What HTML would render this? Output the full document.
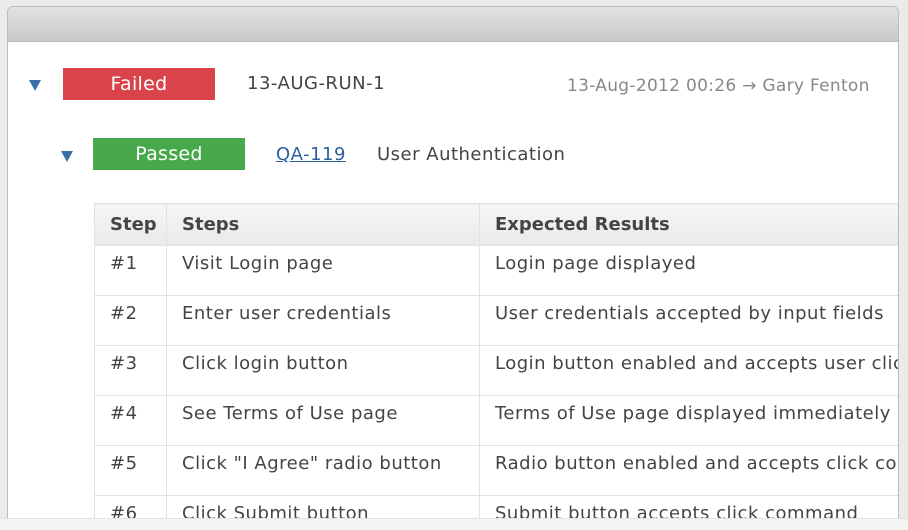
<!DOCTYPE html>
<html><head><meta charset="utf-8"><style>
*{margin:0;padding:0;box-sizing:border-box}
html,body{width:908px;height:530px;overflow:hidden}
body{background:#ebebeb;font-family:"DejaVu Sans","Liberation Sans",sans-serif;color:#444;position:relative}
.panel{position:absolute;left:7px;top:6px;width:892px;height:524px;background:#fff;border:1px solid #bdbdbd;border-bottom:none;border-radius:6px 6px 0 0;overflow:hidden}
.hdr{height:35px;background:linear-gradient(#e2e2e2,#c9c9c9);border-bottom:1px solid #b8b8b8}
.tri{position:absolute;width:0;height:0;border-left:6px solid transparent;border-right:6px solid transparent;border-top:11px solid #3a6fa8}
.badge{position:absolute;color:#fff;font-size:19px;text-align:center;line-height:32px;height:32px;letter-spacing:.3px}
.t{position:absolute;font-size:18px;white-space:nowrap;letter-spacing:.5px}
table{position:absolute;left:86px;top:196px;width:810px;table-layout:fixed;border-collapse:collapse;font-size:18px;letter-spacing:.5px}
td,th{border:1px solid #e2e2e2;height:50px;padding-left:15px;text-align:left;white-space:nowrap;overflow:hidden;color:#444;vertical-align:top;padding-top:7px}
th{height:42px;background:linear-gradient(#f6f6f6,#e9e9e9);font-weight:bold;vertical-align:middle;padding-top:0;letter-spacing:0}
.fade{position:absolute;left:0;top:518px;width:908px;height:12px;background:#f4f4f4;border-top:1px solid #e4e4e4}
</style></head><body>
<div class="panel"><div class="hdr"></div>
<div class="tri" style="left:21px;top:73px"></div>
<div class="badge" style="left:55px;top:61px;width:152px;background:#d9444a">Failed</div>
<div class="t" style="left:239px;top:66px">13-AUG-RUN-1</div>
<div class="t" style="left:559px;top:69px;font-size:17px;color:#888;letter-spacing:.3px">13-Aug-2012 00:26 → Gary Fenton</div>
<div class="tri" style="left:53px;top:144px"></div>
<div class="badge" style="left:85px;top:131px;width:152px;background:#48a84c">Passed</div>
<div class="t" style="left:268px;top:137px;color:#2c5f9e;text-decoration:underline">QA-119</div>
<div class="t" style="left:369px;top:137px">User Authentication</div>
<table>
<colgroup><col style="width:72px"><col style="width:313px"><col style="width:425px"></colgroup>
<tr><th>Step</th><th>Steps</th><th>Expected Results</th></tr>
<tr><td>#1</td><td>Visit Login page</td><td>Login page displayed</td></tr>
<tr><td>#2</td><td>Enter user credentials</td><td>User credentials accepted by input fields</td></tr>
<tr><td>#3</td><td>Click login button</td><td>Login button enabled and accepts user clic</td></tr>
<tr><td>#4</td><td>See Terms of Use page</td><td>Terms of Use page displayed immediately</td></tr>
<tr><td>#5</td><td>Click "I Agree" radio button</td><td>Radio button enabled and accepts click co</td></tr>
<tr><td>#6</td><td>Click Submit button</td><td>Submit button accepts click command</td></tr>
</table>
</div>
<div class="fade"></div>
</body></html>
